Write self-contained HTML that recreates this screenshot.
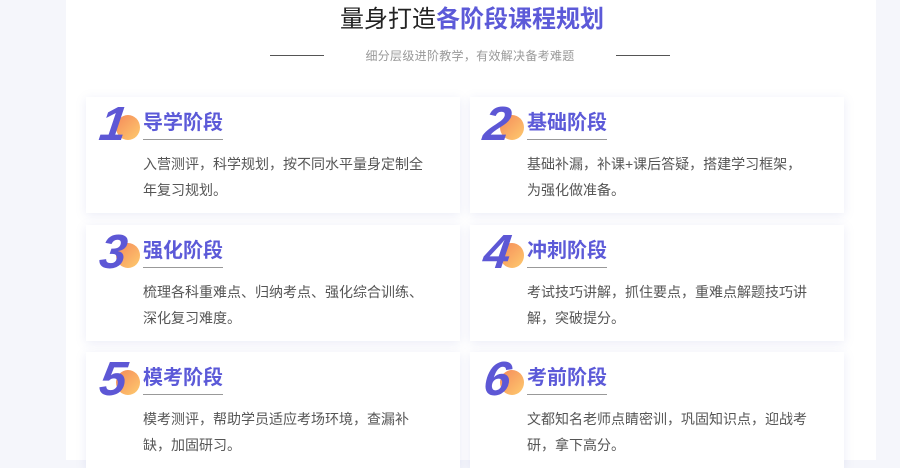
<!DOCTYPE html>
<html><head><meta charset="utf-8"><style>
*{margin:0;padding:0;box-sizing:border-box}
body{width:900px;height:460px;overflow:hidden;background:#f5f6fb;font-family:"Liberation Sans","Noto Sans CJK SC",sans-serif}
.panel{position:absolute;left:66px;top:0;width:810px;height:460px;background:#fff}
h1{position:absolute;left:22px;width:900px;top:4px;text-align:center;font-size:24px;font-weight:normal;color:#222;line-height:32px}
h1 b{color:#5c5ad8;font-weight:bold}
.sub{position:absolute;top:47px;left:20px;width:900px;text-align:center;font-size:12px;color:#999;line-height:18px;letter-spacing:0.3px}
.ln{position:absolute;top:55px;width:54px;height:1px;background:#555}
.card{position:absolute;width:374px;height:116px;background:#fff;box-shadow:0 2px 10px rgba(120,130,200,.15)}
.num{position:absolute;left:14px;top:6px;width:42px;height:44px}
.num i{position:absolute;left:16px;top:12px;width:24px;height:25px;border-radius:50%;background:linear-gradient(135deg,#f58a5a,#fecb6e)}
.num span{position:absolute;left:0;top:-4px;font:italic bold 48px/52px "Liberation Sans",sans-serif;color:#5d57d5;transform:skewX(-8deg)}
.t{position:absolute;left:57px;top:12px;font-size:20px;font-weight:bold;color:#5c5ad8;line-height:28px;padding-bottom:2px;border-bottom:1px solid #999}
.d{position:absolute;left:57px;top:54px;width:285px;font-size:14px;color:#555;line-height:26px}
</style></head><body>
<div class="panel"></div>
<h1>量身打造<b>各阶段课程规划</b></h1>
<div class="ln" style="left:270px"></div><div class="ln" style="left:616px"></div>
<div class="sub">细分层级进阶教学，有效解决备考难题</div>

<div class="card" style="left:86px;top:97px"><div class="num"><i></i><span>1</span></div><div class="t">导学阶段</div><div class="d">入营测评，科学规划，按不同水平量身定制全年复习规划。</div></div>
<div class="card" style="left:470px;top:97px"><div class="num"><i></i><span>2</span></div><div class="t">基础阶段</div><div class="d">基础补漏，补课+课后答疑，搭建学习框架，为强化做准备。</div></div>
<div class="card" style="left:86px;top:225px"><div class="num"><i></i><span>3</span></div><div class="t">强化阶段</div><div class="d">梳理各科重难点、归纳考点、强化综合训练、深化复习难度。</div></div>
<div class="card" style="left:470px;top:225px"><div class="num"><i></i><span>4</span></div><div class="t">冲刺阶段</div><div class="d">考试技巧讲解，抓住要点，重难点解题技巧讲解，突破提分。</div></div>
<div class="card" style="left:86px;top:352px"><div class="num"><i></i><span>5</span></div><div class="t">模考阶段</div><div class="d">模考测评，帮助学员适应考场环境，查漏补缺，加固研习。</div></div>
<div class="card" style="left:470px;top:352px"><div class="num"><i></i><span>6</span></div><div class="t">考前阶段</div><div class="d">文都知名老师点睛密训，巩固知识点，迎战考研，拿下高分。</div></div>
</body></html>
